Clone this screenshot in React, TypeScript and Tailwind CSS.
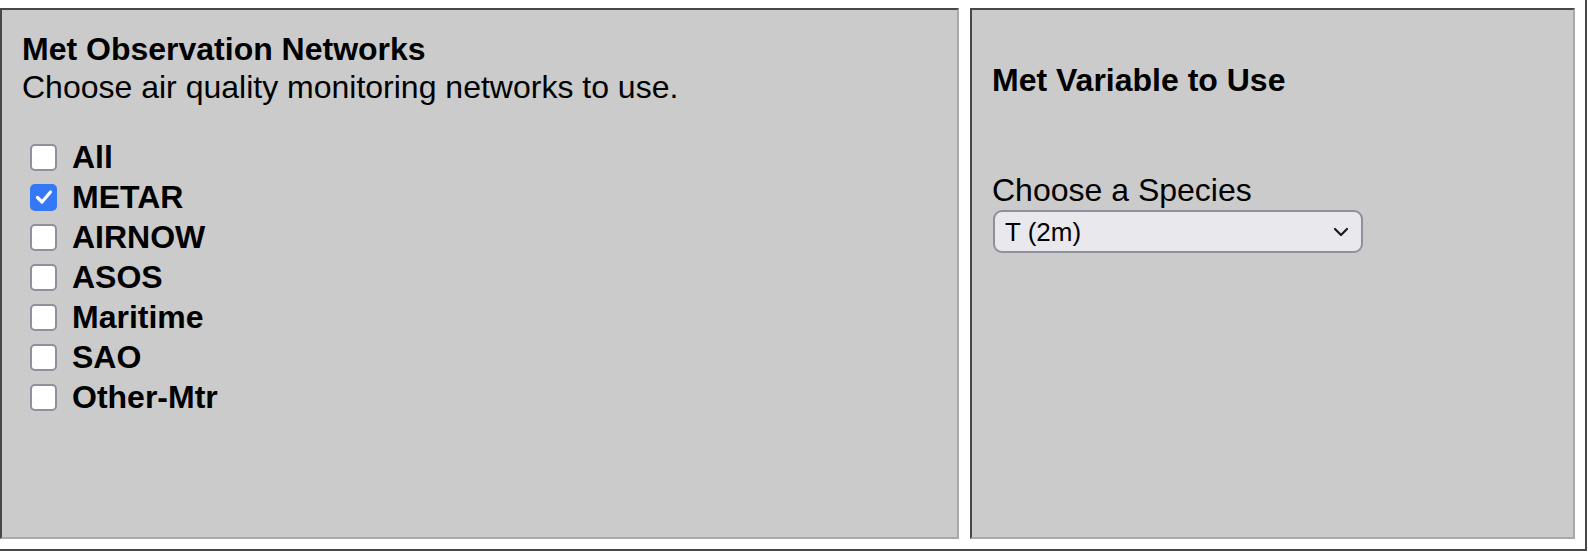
import { useState } from 'react'

const networks = ['All', 'METAR', 'AIRNOW', 'ASOS', 'Maritime', 'SAO', 'Other-Mtr']

function CheckRow({ label, checked, onToggle }: { label: string; checked: boolean; onToggle: () => void }) {
  return (
    <label className="flex h-[40px] items-center cursor-pointer" onClick={onToggle}>
      {checked ? (
        <span className="ml-[8px] flex h-[27px] w-[27px] items-center justify-center rounded-[5px] bg-[#3478f6]">
          <svg width="22" height="22" viewBox="0 0 22 22" fill="none">
            <path d="M4.5 11.5l4.5 4.5 8.5-10" stroke="white" strokeWidth={3.2} strokeLinecap="round" strokeLinejoin="round" />
          </svg>
        </span>
      ) : (
        <span className="ml-[8px] h-[27px] w-[27px] rounded-[5px] border-2 border-[#8f8f9d] bg-white" />
      )}
      <span className="ml-[15px] text-[32px] font-bold leading-[38px]">{label}</span>
    </label>
  )
}

export default function App() {
  const [picked, setPicked] = useState<string[]>(['METAR'])

  const toggle = (name: string) => {
    setPicked((p) => (p.includes(name) ? p.filter((n) => n !== name) : [...p, name]))
  }

  return (
    <div className="h-[556px] w-[1588px] bg-white font-['Liberation_Sans',Arial,sans-serif] text-black">
      <div className="flex h-[551px] w-[1587px] gap-[11px] border-r-2 border-b-2 border-[#474747] pt-[8px] pr-[10px] pb-[10px]">
        {/* networks */}
        <div className="w-[959px] border-2 border-t-[#474747] border-l-[#474747] border-r-[#a9a9a9] border-b-[#a9a9a9] bg-[#cbcbcb] pt-[20px] pl-[20px]">
          <div className="text-[32px] font-bold leading-[38px]">Met Observation Networks</div>
          <div className="text-[32px] leading-[38px]">Choose air quality monitoring networks to use.</div>
          <div className="mt-[31px]">
            {networks.map((n) => (
              <CheckRow key={n} label={n} checked={picked.includes(n)} onToggle={() => toggle(n)} />
            ))}
          </div>
        </div>

        {/* variable */}
        <div className="w-[605px] border-2 border-t-[#474747] border-l-[#474747] border-r-[#a9a9a9] border-b-[#a9a9a9] bg-[#cbcbcb] pt-[52px] pl-[20px]">
          <div className="text-[32px] font-bold leading-[37px]">Met Variable to Use</div>
          <div className="mt-[73px] text-[32px] leading-[37px]">Choose a Species</div>
          <div className="mt-[1px] ml-[1px] flex h-[43px] w-[370px] items-center justify-between rounded-[9px] border-2 border-[#8f8f9d] bg-[#e9e9ed] pl-[10px] pr-[12px]">
            <span className="text-[26px] leading-none">T (2m)</span>
            <svg width="16" height="10" viewBox="0 0 16 10" fill="none">
              <path d="M2 2l6 6 6-6" stroke="#1a1a1a" strokeWidth={2.2} strokeLinecap="round" strokeLinejoin="round" />
            </svg>
          </div>
        </div>
      </div>
    </div>
  )
}
